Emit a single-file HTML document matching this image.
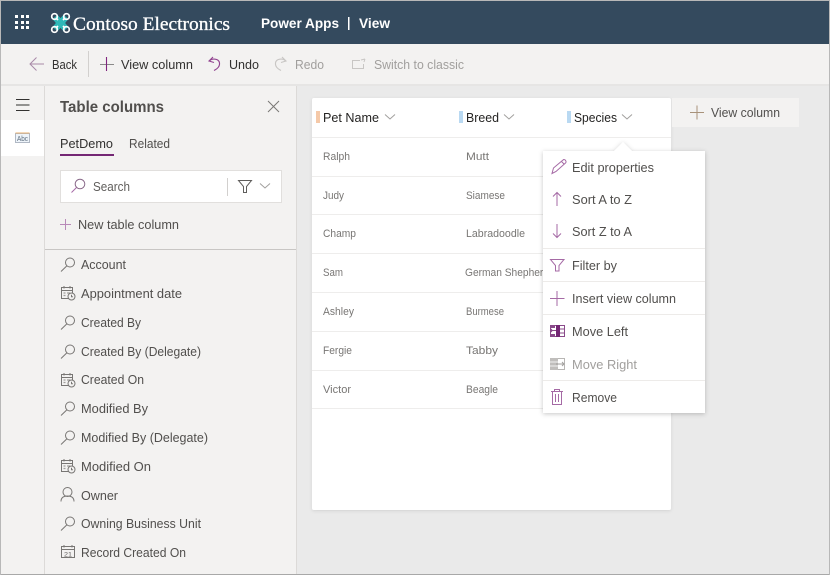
<!DOCTYPE html>
<html lang="en">
<head>
<meta charset="utf-8">
<title>Table columns</title>
<style>
html,body{margin:0;padding:0;background:#eaeaea;width:830px;height:575px;overflow:hidden}
svg{display:block}
text{font-family:"Liberation Sans",sans-serif;font-size:12.5px;fill:#323130}
.p{stroke:#a56aa5;fill:none;stroke-width:1}
.r{fill:#787674;font-size:11px}
.f{fill:#514f4d}
</style>
</head>
<body>
<svg width="830" height="575" viewBox="0 0 830 575" xmlns="http://www.w3.org/2000/svg">
<defs>
<filter id="sh" x="-10%" y="-10%" width="120%" height="120%"><feDropShadow dx="0" dy="1" stdDeviation="2.5" flood-color="#000" flood-opacity=".22"/></filter>
<filter id="sh2" x="-5%" y="-5%" width="110%" height="110%"><feDropShadow dx="0" dy="1" stdDeviation="1.5" flood-color="#000" flood-opacity=".1"/></filter>
<g id="lk" fill="none" stroke="#787674" stroke-width="1"><circle cx="9.5" cy="5.5" r="4.5"/><path d="M6.2 9 L0.5 14.5"/></g>
<g id="cal" fill="none" stroke="#787674" stroke-width="1"><rect x="0.5" y="1.5" width="11" height="11" fill="#f3f2f1"/><path d="M0.5 4.5H11.5M3 0V2.5M9 0V2.5" /><path d="M2.5 7h2M2.5 9.5h2M6 7h3" stroke-width="1.2" stroke="#a19f9d"/><circle cx="10.5" cy="10.5" r="3.5" fill="#f3f2f1"/><path d="M10.5 8.8v1.9h1.4"/></g>
</defs>

<rect width="830" height="575" fill="#eaeaea"/>
<!-- header -->
<rect x="0" y="1" width="830" height="43" fill="#344a5e"/>
<g fill="#fff">
<rect x="15" y="15" width="3" height="3"/><rect x="21" y="15" width="3" height="3"/><rect x="26" y="15" width="3" height="3"/>
<rect x="15" y="21" width="3" height="3"/><rect x="21" y="21" width="3" height="3"/><rect x="26" y="21" width="3" height="3"/>
<rect x="15" y="26" width="3" height="3"/><rect x="21" y="26" width="3" height="3"/><rect x="26" y="26" width="3" height="3"/>
</g>
<!-- logo -->
<g>
<path d="M55 17 L66 29 M66 17 L55 29" stroke="#2fb8b8" stroke-width="6.500" fill="none"/>
<rect x="55.500" y="18.500" width="10" height="9" fill="#2fb8b8"/>
<g fill="none" stroke="#fff" stroke-width="1.700">
<circle cx="54.500" cy="16.500" r="2.800"/><circle cx="66.500" cy="16.500" r="2.800"/><circle cx="54.500" cy="29.500" r="2.800"/><circle cx="66.500" cy="29.500" r="2.800"/>
<path d="M56.500 18.500 L58 20 M64.500 18.500 L63 20 M56.500 27.500 L58 26 M64.500 27.500 L63 26"/>
</g>
</g>
<text x="73" y="30" textLength="157" lengthAdjust="spacingAndGlyphs" style="font-family:'Liberation Serif',serif;font-size:19px;fill:#fff;stroke:#fff;stroke-width:.3">Contoso Electronics</text>
<text x="261" y="28" textLength="78" lengthAdjust="spacingAndGlyphs" style="font-size:13.500px;font-weight:bold;fill:#fff">Power Apps</text>
<rect x="348" y="17" width="1.500" height="13" fill="#fff"/>
<text x="359" y="28" textLength="31" lengthAdjust="spacingAndGlyphs" style="font-size:13.500px;font-weight:bold;fill:#fff">View</text>

<!-- toolbar -->
<rect x="0" y="44" width="830" height="40" fill="#f3f2f1"/>
<rect x="0" y="84" width="830" height="2" fill="#e6e5e4"/>
<path d="M30 64 H44 M36.500 57.500 L30 64 L36.500 70.500" fill="none" stroke="#a88aa8" stroke-width="1"/>
<text x="52" y="69" textLength="25" lengthAdjust="spacingAndGlyphs" style="font-size:13px">Back</text>
<rect x="88" y="51" width="1" height="26" fill="#d2d0ce"/>
<path d="M100 64.500 H114" stroke="#8a8a8a" stroke-width="1"/>
<path d="M106.500 57 V71" stroke="#80267f" stroke-width="1.100"/>
<text x="121" y="69" textLength="72" lengthAdjust="spacingAndGlyphs">View column</text>
<path d="M213 57 L209 61 L214 62.500 M209.500 61 C212 58 219 58.500 219.500 63 C220 66.500 217 69 214 70.500" fill="none" stroke="#80267f" stroke-width="1.100" opacity=".85"/>
<text x="229" y="69" textLength="30" lengthAdjust="spacingAndGlyphs">Undo</text>
<path d="M282 57 L286 61 L281 62.500 M285.500 61 C283 58 276 58.500 275.500 63 C275 66.500 278 69 281 70.500" fill="none" stroke="#c8c6c4" stroke-width="1.100"/>
<text x="295" y="69" textLength="29" lengthAdjust="spacingAndGlyphs" style="fill:#a19f9d">Redo</text>
<path d="M360 60.500 H352.500 V68.500 H363.500 V64 M361 60 L365 59 M365 59 L364 62" fill="none" stroke="#c8c6c4" stroke-width="1"/>
<text x="374" y="69" textLength="90" lengthAdjust="spacingAndGlyphs" style="fill:#a19f9d">Switch to classic</text>

<!-- rail -->
<rect x="0" y="86" width="44" height="489" fill="#f3f2f1"/>
<rect x="44" y="86" width="1" height="489" fill="#dcdad8"/>
<path d="M16 99.500H29.500M16 105H29.500M16 110.500H29.500" stroke="#323130" stroke-width="1"/>
<rect x="1" y="120" width="43" height="36" fill="#fff"/>
<rect x="15.500" y="133.500" width="14" height="9" fill="#eef4fa" stroke="#b0b8c4" stroke-width="1"/>
<text x="17" y="141" textLength="11" lengthAdjust="spacingAndGlyphs" style="font-size:7px;fill:#5a6a7a">Abc</text>
<rect x="15.500" y="132.500" width="14" height="1" fill="#e8b070"/>

<!-- panel -->
<rect x="45" y="86" width="251" height="489" fill="#f3f2f1"/>
<rect x="296" y="86" width="1" height="489" fill="#dcdad8"/>
<text x="60" y="112" textLength="104" lengthAdjust="spacingAndGlyphs" style="font-size:15.500px;font-weight:bold;fill:#514f4d">Table columns</text>
<path d="M268 101 L279 112 M279 101 L268 112" stroke="#797775" stroke-width="1" fill="none"/>
<text x="60" y="148" textLength="53" lengthAdjust="spacingAndGlyphs">PetDemo</text>
<text x="129" y="148" textLength="41" lengthAdjust="spacingAndGlyphs" style="fill:#514f4d">Related</text>
<rect x="60" y="154" width="54" height="2" fill="#742774"/>
<rect x="60.500" y="170.500" width="221" height="32" fill="#fff" stroke="#e1dfdd"/>
<circle cx="80" cy="184" r="4.800" fill="none" stroke="#8a6a8a" stroke-width="1"/>
<path d="M76.500 187.500 L71.500 192.500" stroke="#a56aa5" stroke-width="1"/>
<text x="93" y="191" textLength="37" lengthAdjust="spacingAndGlyphs" style="fill:#605e5c;font-size:13px">Search</text>
<rect x="227" y="178" width="1" height="18" fill="#d2d0ce"/>
<path d="M238.500 180.500 H251.500 L246.500 186.500 V192.500 H243.500 V186.500 Z" fill="none" stroke="#605e5c" stroke-width="1"/>
<path d="M260 183.500 L265 188 L270 183.500" fill="none" stroke="#a19f9d" stroke-width="1"/>
<path d="M60 224.500 H71 M65.500 219 V230" stroke="#b98ab9" stroke-width="1"/>
<text x="78" y="229" textLength="101" lengthAdjust="spacingAndGlyphs" class="f">New table column</text>
<rect x="45" y="249" width="251" height="1" fill="#c8c6c4"/>
<rect x="0" y="574" width="830" height="1" fill="#a8a8a8"/>

<!-- list -->
<use href="#lk" x="60.500" y="257"/>
<text x="81" y="269" textLength="45" lengthAdjust="spacingAndGlyphs" class="f">Account</text>
<use href="#cal" x="61" y="286"/>
<text x="81" y="298" textLength="101" lengthAdjust="spacingAndGlyphs" class="f">Appointment date</text>
<use href="#lk" x="60.500" y="315"/>
<text x="81" y="327" textLength="60" lengthAdjust="spacingAndGlyphs" class="f">Created By</text>
<use href="#lk" x="60.500" y="344"/>
<text x="81" y="356" textLength="120" lengthAdjust="spacingAndGlyphs" class="f">Created By (Delegate)</text>
<use href="#cal" x="61" y="373"/>
<text x="81" y="384" textLength="63" lengthAdjust="spacingAndGlyphs" class="f">Created On</text>
<use href="#lk" x="60.500" y="401"/>
<text x="81" y="413" textLength="67" lengthAdjust="spacingAndGlyphs" class="f">Modified By</text>
<use href="#lk" x="60.500" y="430"/>
<text x="81" y="442" textLength="127" lengthAdjust="spacingAndGlyphs" class="f">Modified By (Delegate)</text>
<use href="#cal" x="61" y="459"/>
<text x="81" y="471" textLength="70" lengthAdjust="spacingAndGlyphs" class="f">Modified On</text>
<g fill="none" stroke="#787674" stroke-width="1"><circle cx="67.500" cy="492" r="4.500"/><path d="M61 501.500 C61 497 64 496 67.500 496 C71 496 74 497 74 501.500"/></g>
<text x="81" y="500" textLength="37" lengthAdjust="spacingAndGlyphs" class="f">Owner</text>
<use href="#lk" x="60.500" y="516"/>
<text x="81" y="528" textLength="120" lengthAdjust="spacingAndGlyphs" class="f">Owning Business Unit</text>
<rect x="61.500" y="546.500" width="13" height="11" fill="none" stroke="#787674"/>
<path d="M61.500 549.500H74.500M64 545V547.500M72 545V547.500" stroke="#787674" fill="none"/>
<text x="64" y="556.500" textLength="8" lengthAdjust="spacingAndGlyphs" style="font-size:6px;fill:#605e5c">21</text>
<text x="81" y="557" textLength="105" lengthAdjust="spacingAndGlyphs" class="f">Record Created On</text>

<!-- table card -->
<rect x="312" y="98" width="359" height="412" rx="2" fill="#fff" filter="url(#sh2)"/>
<g fill="#eeedec">
<rect x="312" y="137" width="359" height="1"/>
<rect x="312" y="176" width="359" height="1"/>
<rect x="312" y="214" width="359" height="1"/>
<rect x="312" y="253" width="359" height="1"/>
<rect x="312" y="292" width="359" height="1"/>
<rect x="312" y="331" width="359" height="1"/>
<rect x="312" y="370" width="359" height="1"/>
<rect x="312" y="408" width="359" height="1"/>
</g>
<rect x="316" y="111" width="4" height="12" fill="#f5c9a8"/>
<text x="323" y="122" textLength="56" lengthAdjust="spacingAndGlyphs" style="fill:#252423">Pet Name</text>
<path d="M385 114.500 L390 119 L395 114.500" fill="none" stroke="#a19f9d"/>
<rect x="459" y="111" width="4" height="12" fill="#b9d9f2"/>
<text x="466" y="122" textLength="33" lengthAdjust="spacingAndGlyphs" style="fill:#252423">Breed</text>
<path d="M504 114.500 L509 119 L514 114.500" fill="none" stroke="#a19f9d"/>
<rect x="567" y="111" width="4" height="12" fill="#b9d9f2"/>
<text x="574" y="122" textLength="43" lengthAdjust="spacingAndGlyphs" style="fill:#252423">Species</text>
<path d="M622 114.500 L627 119 L632 114.500" fill="none" stroke="#a19f9d"/>

<text x="323" y="160" textLength="27" lengthAdjust="spacingAndGlyphs" class="r">Ralph</text>
<text x="323" y="199" textLength="21" lengthAdjust="spacingAndGlyphs" class="r">Judy</text>
<text x="323" y="237" textLength="33" lengthAdjust="spacingAndGlyphs" class="r">Champ</text>
<text x="323" y="276" textLength="20" lengthAdjust="spacingAndGlyphs" class="r">Sam</text>
<text x="323" y="315" textLength="31" lengthAdjust="spacingAndGlyphs" class="r">Ashley</text>
<text x="323" y="354" textLength="29" lengthAdjust="spacingAndGlyphs" class="r">Fergie</text>
<text x="323" y="393" textLength="28" lengthAdjust="spacingAndGlyphs" class="r">Victor</text>
<text x="466" y="160" textLength="23" lengthAdjust="spacingAndGlyphs" class="r">Mutt</text>
<text x="466" y="199" textLength="39" lengthAdjust="spacingAndGlyphs" class="r">Siamese</text>
<text x="466" y="237" textLength="59" lengthAdjust="spacingAndGlyphs" class="r">Labradoodle</text>
<text x="465" y="276" textLength="84" lengthAdjust="spacingAndGlyphs" class="r">German Shepherd</text>
<text x="466" y="315" textLength="38" lengthAdjust="spacingAndGlyphs" class="r">Burmese</text>
<text x="466" y="354" textLength="32" lengthAdjust="spacingAndGlyphs" class="r">Tabby</text>
<text x="466" y="393" textLength="32" lengthAdjust="spacingAndGlyphs" class="r">Beagle</text>

<!-- view column button -->
<rect x="672" y="98" width="127" height="29" fill="#f3f2f1"/>
<path d="M690 112.500 H704" stroke="#a8927a" stroke-width="1"/>
<path d="M697 105.500 V119.500" stroke="#a8927a" stroke-width="1"/>
<text x="711" y="117" textLength="69" lengthAdjust="spacingAndGlyphs" class="f">View column</text>

<!-- menu -->
<g filter="url(#sh)">
<path d="M543 151 H614 L623 142 L632 151 H705 V413 H543 Z" fill="#fff"/>
</g>
<g fill="#edebe9">
<rect x="543" y="248" width="162" height="1"/>
<rect x="543" y="281" width="162" height="1"/>
<rect x="543" y="314" width="162" height="1"/>
<rect x="543" y="380" width="162" height="1"/>
</g>
<path d="M552 173.500 L553.500 168 L563 160 C564 159 565.500 160 565.500 160.500 C566.500 161.500 566 162.500 565.500 163 L556 171.500 Z M561.500 161.500 L564.500 164.500" class="p"/>
<text x="572" y="172" textLength="82" lengthAdjust="spacingAndGlyphs" class="f">Edit properties</text>
<path d="M557 192.500 V206 M553 196.500 L557 192.500 L561 196.500" class="p"/>
<text x="572" y="204" textLength="60" lengthAdjust="spacingAndGlyphs" class="f">Sort A to Z</text>
<path d="M557 224 V237.500 M553 233.500 L557 237.500 L561 233.500" class="p"/>
<text x="572" y="236" textLength="60" lengthAdjust="spacingAndGlyphs" class="f">Sort Z to A</text>
<path d="M550.500 259.500 H564 L559 265.500 V271 H555.500 V265.500 Z" class="p"/>
<text x="572" y="270" textLength="45" lengthAdjust="spacingAndGlyphs" class="f">Filter by</text>
<path d="M550 298.500 H564.500 M557 291 V306" class="p"/>
<text x="572" y="303" textLength="104" lengthAdjust="spacingAndGlyphs" class="f">Insert view column</text>
<g>
<rect x="550.500" y="325.500" width="14" height="11" fill="#fff" stroke="#8a4a8a"/>
<rect x="550" y="325" width="5" height="3" fill="#8a4a8a"/>
<rect x="550" y="334" width="5" height="3" fill="#8a4a8a"/>
<rect x="556" y="325" width="4" height="12" fill="#742774"/>
<path d="M550 330.500 H556 M552 329 L550.500 330.500 L552 332" stroke="#8a4a8a" fill="none"/>
<path d="M560 329 H565 M560 333 H565" stroke="#8a4a8a"/>
</g>
<text x="572" y="336" textLength="56" lengthAdjust="spacingAndGlyphs" class="f">Move Left</text>
<g>
<rect x="550.500" y="358.500" width="14" height="11" fill="#fff" stroke="#b8b6b4"/>
<rect x="550" y="358" width="8" height="12" fill="#c0bebc"/>
<path d="M550 362 H558 M550 366 H558" stroke="#f0f0f0"/>
<path d="M556 364 H564 M562 362 L564 364 L562 366" stroke="#a19f9d" fill="#fff"/>
</g>
<text x="572" y="369" textLength="65" lengthAdjust="spacingAndGlyphs" style="fill:#a19f9d">Move Right</text>
<path d="M551 391.500 H563 M554.500 391.500 V389.500 H559.500 V391.500 M552.500 391.500 V404.500 H561.500 V391.500 M555.500 394 V402 M558.500 394 V402" class="p"/>
<text x="572" y="402" textLength="45" lengthAdjust="spacingAndGlyphs" class="f">Remove</text>

<!-- window edges -->
<rect x="0" y="0" width="830" height="1" fill="#b8b8b8"/>
<rect x="0" y="0" width="1" height="575" fill="#b8b8b8"/>
<rect x="829" y="0" width="1" height="575" fill="#b8b8b8"/>
</svg>
</body>
</html>
